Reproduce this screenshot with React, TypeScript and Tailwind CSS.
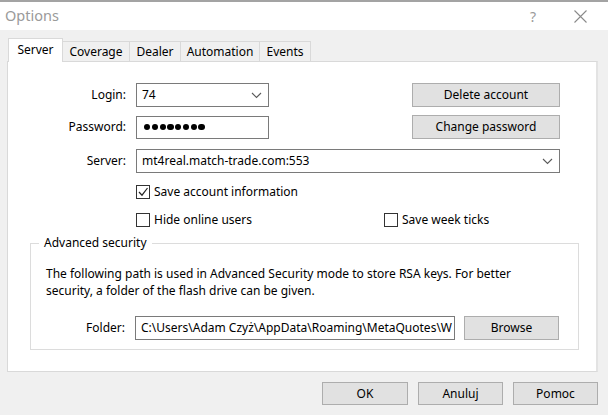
import React from 'react';

const font = { fontFamily: '"Noto Sans", "Open Sans", sans-serif' };

function Chevron() {
  return (
    <svg width="11" height="7" viewBox="0 0 11 7" className="shrink-0">
      <polyline points="1,1 5.5,5.5 10,1" fill="none" stroke="#5a5a5a" strokeWidth="1.1" />
    </svg>
  );
}

function Button({ label, className = '' }: { label: string; className?: string }) {
  return (
    <div
      className={`flex items-center justify-center border border-[#adadad] bg-[#e1e1e1] text-[12px] text-black ${className}`}
    >
      {label}
    </div>
  );
}

function Checkbox({ label, checked = false }: { label: string; checked?: boolean }) {
  return (
    <div className="flex items-center gap-[4px]">
      <div className="w-[14px] h-[14px] border border-[#333333] bg-white flex items-center justify-center">
        {checked && (
          <svg width="12" height="12" viewBox="0 0 12 12">
            <polyline points="2,6 5,9.2 10.5,2" fill="none" stroke="#222" strokeWidth="1.2" />
          </svg>
        )}
      </div>
      <span className="text-[12px] leading-none">{label}</span>
    </div>
  );
}

const tabs = ['Server', 'Coverage', 'Dealer', 'Automation', 'Events'];
const tabWidths = ['w-[55px]', 'w-[67px]', 'w-[51px]', 'w-[79px]', 'w-[51px]'];

export default function App() {
  return (
    <div className="w-[608px] h-[415px] flex flex-col bg-[#f0f0f0] text-black overflow-hidden" style={font}>
      {/* window frame top */}
      <div className="h-[2px] bg-[#a3a3a3]" />

      {/* Title bar */}
      <div className="h-[28px] bg-white flex items-center pl-[5px] pr-[21px]">
        <span className="text-[14.5px] text-[#9a9a9a]">Options</span>
        <span className="ml-auto text-[14px] text-[#9a9a9a] mr-[38px]">?</span>
        <svg width="13" height="13" viewBox="0 0 13 13">
          <path d="M0.5 0.5 L12.5 12.5 M12.5 0.5 L0.5 12.5" stroke="#8a8a8a" strokeWidth="1.1" />
        </svg>
      </div>

      <div className="flex-1 flex flex-col px-[7px] pt-[9px]">
        {/* Tabs */}
        <div className="flex items-end h-[23px] pl-[1px] relative z-10 -mb-[1px]">
          {tabs.map((t, i) =>
            i === 0 ? (
              <div
                key={t}
                className={`${tabWidths[i]} h-[24px] bg-white border border-b-0 border-[#d9d9d9] flex items-center justify-center text-[12px] pb-[2px]`}
              >
                {t}
              </div>
            ) : (
              <div
                key={t}
                className={`${tabWidths[i]} h-[21px] bg-[#f0f0f0] border border-l-0 border-[#d9d9d9] flex items-center justify-center text-[12px]`}
              >
                {t}
              </div>
            )
          )}
        </div>

        {/* Panel */}
        <div className="h-[311px] w-[591px] bg-white border border-[#d9d9d9] border-r-[2px] border-r-[#e3e3e3] flex flex-col pt-[21px] text-[12px]">
          {/* Login row */}
          <div className="flex items-center h-[24px]">
            <div className="w-[118px] text-right">Login:</div>
            <div className="ml-[10px] w-[133px] h-[24px] border border-[#7a7a7a] flex items-center pl-[5px] pr-[6px]">
              <span className="flex-1">74</span>
              <Chevron />
            </div>
            <Button label="Delete account" className="ml-[143px] w-[148px] h-[24px]" />
          </div>

          {/* Password row */}
          <div className="flex items-center h-[24px] mt-[8px]">
            <div className="w-[118px] text-right">Password:</div>
            <div className="ml-[10px] w-[133px] h-[23px] border border-[#7a7a7a] flex items-center pl-[7px] gap-[1.6px]">
              {Array.from({ length: 8 }).map((_, i) => (
                <div key={i} className="w-[6.2px] h-[6.2px] rounded-full bg-black" />
              ))}
            </div>
            <Button label="Change password" className="ml-[143px] w-[148px] h-[24px]" />
          </div>

          {/* Server row */}
          <div className="flex items-center h-[24px] mt-[10px]">
            <div className="w-[118px] text-right">Server:</div>
            <div className="ml-[10px] w-[424px] h-[24px] border border-[#7a7a7a] flex items-center pl-[5px] pr-[6px]">
              <span className="flex-1">mt4real.match-trade.com:553</span>
              <Chevron />
            </div>
          </div>

          {/* Checkboxes */}
          <div className="flex items-center mt-[12px] pl-[128px] h-[14px]">
            <Checkbox label="Save account information" checked />
          </div>
          <div className="flex items-center mt-[14px] pl-[128px] h-[14px]">
            <div className="w-[248px]">
              <Checkbox label="Hide online users" />
            </div>
            <Checkbox label="Save week ticks" />
          </div>

          {/* Advanced security group */}
          <div className="relative ml-[22px] mt-[16px] w-[549px] h-[107px] border border-[#dcdcdc] flex flex-col pl-[15px] pt-[21px]">
            <span className="absolute -top-[9px] left-[8px] bg-white px-[5px] leading-[16px]">Advanced security</span>
            <p className="leading-[17px] w-[500px]">
              The following path is used in Advanced Security mode to store RSA keys. For better security, a
              folder of the flash drive can be given.
            </p>
            <div className="flex items-center mt-[17px] h-[24px] -ml-[24px]">
              <div className="w-[103px] text-right">Folder:</div>
              <div className="ml-[10px] w-[320px] h-[24px] border border-[#7a7a7a] flex items-center pl-[5px] overflow-hidden whitespace-nowrap">
                C:\Users\Adam Czyż\AppData\Roaming\MetaQuotes\W
              </div>
              <Button label="Browse" className="ml-[9px] w-[95px] h-[24px]" />
            </div>
          </div>
        </div>

        {/* Bottom buttons */}
        <div className="flex justify-end gap-[10px] mt-[10px] pr-[3px]">
          <Button label="OK" className="w-[86px] h-[23px]" />
          <Button label="Anuluj" className="w-[85px] h-[23px]" />
          <Button label="Pomoc" className="w-[85px] h-[23px]" />
        </div>
      </div>
    </div>
  );
}
